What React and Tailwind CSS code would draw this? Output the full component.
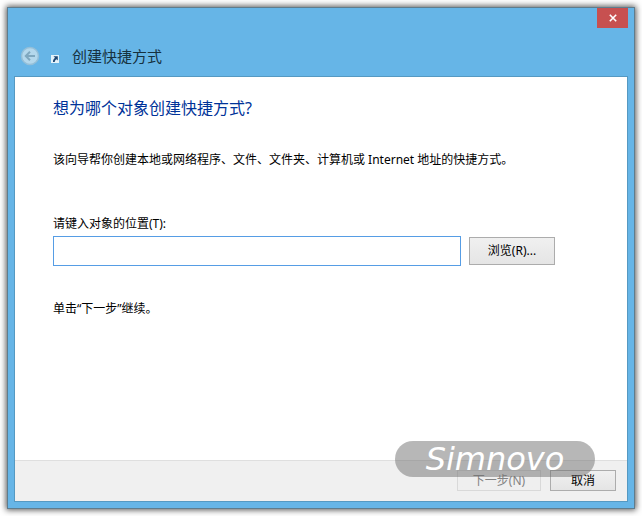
import React from 'react';

function BackIcon() {
  return (
    <svg viewBox="0 0 20 20" className="size-5" aria-hidden="true">
      <circle cx="10" cy="10" r="8.5" fill="#b4d8ec" stroke="#94bfd8" strokeWidth="1.5" />
      <path d="M15 10H6M10 5.8L5.8 10l4.2 4.2" fill="none" stroke="#7fa8bf" strokeWidth="2" />
    </svg>
  );
}

function ShortcutIcon() {
  return (
    <svg viewBox="0 0 8 8" className="size-2" aria-hidden="true">
      <rect width="8" height="8" fill="#e4f2fa" />
      <path d="M2.5 1.2H6.8V5.5L5.6 4.3C4.3 5 3.8 5.8 3.8 7H2C1.9 5.2 2.5 3.9 4 2.7Z" fill="#1d4672" />
    </svg>
  );
}

function TitleBar() {
  return (
    <header className="flex h-[68px] flex-col">
      <div className="flex h-5 justify-end">
        <button type="button" aria-label="关闭" className="flex h-5 w-[31px] items-center justify-center bg-[#c75050]">
          <svg viewBox="0 0 8 8" className="size-2" aria-hidden="true">
            <path d="M0.8 0.8L7.2 7.2M7.2 0.8L0.8 7.2" stroke="#fff" strokeWidth="1.6" />
          </svg>
        </button>
      </div>
      <div className="mt-[18px] flex h-5 items-center pl-[6px]">
        <button type="button" aria-label="后退" disabled className="mr-[11px] size-5">
          <BackIcon />
        </button>
        <span className="mr-[13px] pt-[5px]">
          <ShortcutIcon />
        </span>
        <h1 className="text-[15px] leading-5 text-[#16313f]">创建快捷方式</h1>
      </div>
    </header>
  );
}

const buttonBase = 'border bg-linear-to-b text-xs';

export default function App() {
  return (
    <div className="flex min-h-screen flex-col bg-white p-2 font-['Noto_Sans','Noto_Sans_CJK_SC',sans-serif] text-xs leading-4 text-black">
      <div className="flex flex-1 flex-col bg-[#66b5e7] px-[6px] pb-[6px] shadow-[0_0_0_1px_#5f7c8d,0_0_6px_2px_#555]">
        <TitleBar />
        <div className="flex flex-1 flex-col border border-[#5599c2] bg-white">
          <main className="flex-1 pt-[19px] pr-[72px] pb-6 pl-[38px]">
            <h2 className="text-base leading-6 text-[#003399]">想为哪个对象创建快捷方式?</h2>
            <p className="mt-8">该向导帮你创建本地或网络程序、文件、文件夹、计算机或 Internet 地址的快捷方式。</p>
            <label htmlFor="location" className="mt-12 block">请键入对象的位置(T):</label>
            <div className="mt-1 flex items-center gap-2">
              <input id="location" type="text" className="h-[30px] min-w-0 flex-1 border border-[#569de5] bg-white px-1 outline-none" />
              <button type="button" className={`${buttonBase} h-7 w-[86px] border-[#acacac] from-[#f0f0f0] to-[#e5e5e5]`}>浏览(R)...</button>
            </div>
            <p className="mt-[35px]">单击“下一步”继续。</p>
          </main>
          <footer className="relative flex h-[41px] items-start justify-end gap-[9px] border-t border-[#dfdfdf] bg-[#f0f0f0] pt-[9px] pr-[11px]">
            <button type="button" disabled className={`${buttonBase} h-[21px] w-[84px] border-[#d9d9d9] from-[#efefef] to-[#efefef] text-[#838383]`}>下一步(N)</button>
            <button type="button" className={`${buttonBase} h-[21px] w-[66px] border-[#acacac] from-[#f0f0f0] to-[#e5e5e5]`}>取消</button>
            <div className="pointer-events-none absolute -top-5 right-8 flex h-9 w-[200px] items-center justify-center rounded-full bg-[#707070]/50">
              <span className="font-['DejaVu_Sans',sans-serif] text-[32px] leading-8 text-white italic">Simnovo</span>
            </div>
          </footer>
        </div>
      </div>
    </div>
  );
}
